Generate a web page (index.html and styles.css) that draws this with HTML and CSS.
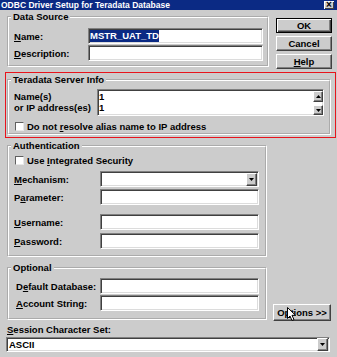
FILE: index.html
```html
<!DOCTYPE html>
<html lang="en">
<head>
  <meta charset="UTF-8" />
  <title>ODBC Driver Setup for Teradata Database</title>
  <link rel="stylesheet" href="styles.css">
</head>
<body>

  <div class="titlebar">
    <span>ODBC Driver Setup for Teradata Database</span>
    <span class="close">×</span>
  </div>

  <div class="top">
    <fieldset class="group ds">
      <legend>Data Source</legend>
      <div class="gbody">
        <div class="row gap1">
          <span class="lbl"><u>N</u>ame:</span>
          <div class="field"><span class="sel">MSTR_UAT_TD</span></div>
        </div>
        <div class="row gap1">
          <span class="lbl"><u>D</u>escription:</span>
          <div class="field"></div>
        </div>
      </div>
    </fieldset>

    <div class="buttons">
      <div class="btn default">OK</div>
      <div class="btn">Cancel</div>
      <div class="btn"><u>H</u>elp</div>
    </div>
  </div>

  <div class="highlight">
    <fieldset class="group server">
      <legend>Teradata Server Info</legend>
      <div class="gbody">
        <div class="hosts">
          <span class="lbl2">Name(s)<br>or IP address(es)</span>
          <div class="field multi">
            <div class="lines">1<br>1</div>
            <div class="spin">
              <div class="mini"><svg width="5" height="3" viewBox="0 0 5 3"><polygon points="0,3 5,3 2.5,0" /></svg></div>
              <div class="mini"><svg width="5" height="3" viewBox="0 0 5 3"><polygon points="0,0 5,0 2.5,3" /></svg></div>
            </div>
          </div>
        </div>
        <div class="check">
          <span class="box"></span>
          <span>Do not <u>r</u>esolve alias name to IP address</span>
        </div>
      </div>
    </fieldset>
  </div>

  <div class="middle">
    <div class="leftcol">
      <fieldset class="group auth">
        <legend>Authentication</legend>
        <div class="gbody">
          <div class="check">
            <span class="box"></span>
            <span>Use <u>I</u>ntegrated Security</span>
          </div>
          <div class="row mech">
            <span class="lbl wide"><u>M</u>echanism:</span>
            <div class="field combo">
              <span class="fill"></span>
              <div class="mini tall"><svg width="5" height="3" viewBox="0 0 5 3"><polygon points="0,0 5,0 2.5,3" /></svg></div>
            </div>
          </div>
          <div class="row gap2">
            <span class="lbl wide">P<u>a</u>rameter:</span>
            <div class="field"></div>
          </div>
          <div class="row gap9">
            <span class="lbl wide"><u>U</u>sername:</span>
            <div class="field"></div>
          </div>
          <div class="row gap3">
            <span class="lbl wide"><u>P</u>assword:</span>
            <div class="field"></div>
          </div>
        </div>
      </fieldset>

      <fieldset class="group optional">
        <legend>Optional</legend>
        <div class="gbody">
          <div class="row">
            <span class="lbl opt">D<u>e</u>fault Database:</span>
            <div class="field"></div>
          </div>
          <div class="row gap1">
            <span class="lbl opt"><u>A</u>ccount String:</span>
            <div class="field"></div>
          </div>
        </div>
      </fieldset>
    </div>

    <div class="btn options">O<u>p</u>tions &gt;&gt;</div>
  </div>

  <div class="session-lbl"><u>S</u>ession Character Set:</div>
  <div class="field combo session">
    <span class="fill">ASCII</span>
    <div class="mini tall"><svg width="5" height="3" viewBox="0 0 5 3"><polygon points="0,0 5,0 2.5,3" /></svg></div>
  </div>

  <svg class="cursor" width="10" height="16" viewBox="0 0 10 16">
    <path d="M0.5 0.5 L0.5 11.5 L3 9 L5 13.5 L7 12.6 L5 8.3 L8.5 8.3 Z" fill="#fff" stroke="#000" stroke-width="1" />
  </svg>

</body>
</html>
```

FILE: styles.css
```css
* {
  box-sizing: border-box;
  margin: 0;
  padding: 0;
}

body {
  width: 337px;
  height: 357px;
  overflow: hidden;
  background: #cccccc;
  color: #000;
  font: bold 9.5px "Liberation Sans", Arial, sans-serif;
  position: relative;
}

u {
  text-decoration: underline;
  text-underline-offset: 1px;
}

/* title bar */

.titlebar {
  height: 10px;
  background: #0b2a84;
  color: #fff;
  display: flex;
  justify-content: space-between;
  align-items: center;
  padding: 0 3px 0 1px;
  font-size: 8.5px;
  line-height: 10px;
  white-space: nowrap;
}

.close {
  width: 10px;
  height: 8px;
  background: #cccccc;
  color: #000;
  font-size: 10px;
  line-height: 8px;
  text-align: center;
  box-shadow: inset 1px 1px #fff, inset -1px -1px #404040;
}

/* group boxes */

fieldset.group {
  border: 2px groove #fff;
  padding: 0;
  min-width: 0;
}

fieldset.group legend {
  margin-left: 2px;
  padding: 0 2px;
  line-height: 12px;
  height: 12px;
}

.row {
  display: flex;
  align-items: center;
}

.gap1 { margin-top: 1px; }
.gap2 { margin-top: 2px; }
.gap3 { margin-top: 3px; }
.gap9 { margin-top: 9px; }

.row:first-child { margin-top: 0; }

.lbl {
  width: 74px;
  flex: none;
  white-space: nowrap;
}

.lbl.wide { width: 86px; }
.lbl.opt { width: 84px; }

/* sunken edit fields */

.field {
  flex: 1;
  height: 16px;
  background: #fff;
  border: 1px solid;
  border-color: #808080 #fff #fff #808080;
  box-shadow: inset 1px 1px #404040, inset -1px -1px #dcdcdc;
  padding: 1px 1px;
  line-height: 12px;
  white-space: nowrap;
  display: flex;
  align-items: center;
}

.sel {
  background: #0b2a84;
  color: #fff;
  margin-left: 0;
}

/* push buttons */

.btn {
  height: 15px;
  background: #cccccc;
  border: 1px solid;
  border-color: #fff #404040 #404040 #fff;
  box-shadow: inset -1px -1px #808080;
  display: flex;
  align-items: center;
  justify-content: center;
  line-height: 12px;
  white-space: nowrap;
}

.btn.default {
  border: 1px solid #000;
  box-shadow: inset 1px 1px #fff, inset -1px -1px #404040, inset -2px -2px #808080;
}

.mini {
  width: 10px;
  height: 11px;
  background: #cccccc;
  border: 1px solid;
  border-color: #fff #404040 #404040 #fff;
  box-shadow: inset -1px -1px #808080;
  display: flex;
  align-items: center;
  justify-content: center;
}

.mini svg {
  fill: #000;
  display: block;
}

/* data source */

.top {
  display: flex;
  align-items: flex-start;
  margin-top: 1px;
}

.ds {
  width: 262px;
  margin-left: 7px;
}

.ds .gbody {
  padding: 5px 4px 4px 5px;
}

.buttons {
  width: 56px;
  margin: 7px 0 0 7px;
  display: flex;
  flex-direction: column;
  gap: 3px;
}

/* server info, outlined in red */

.highlight {
  width: 331px;
  margin: 3px 0 0 5px;
  border: 1px solid #e8141c;
  padding: 1px 4px 2px 1px;
}

.server {
  width: 324px;
}

.server .gbody {
  padding: 3px 5px 1px 5px;
}

.hosts {
  display: flex;
  align-items: flex-start;
}

.lbl2 {
  width: 83px;
  flex: none;
  line-height: 11px;
  padding-top: 2px;
  white-space: nowrap;
}

.field.multi {
  height: 27px;
  padding: 0 0 0 1px;
  align-items: stretch;
}

.lines {
  flex: 1;
  line-height: 11px;
  padding-top: 1px;
}

.spin {
  width: 10px;
  display: flex;
  flex-direction: column;
  justify-content: space-between;
  padding: 1px 0 0;
}

.spin .mini:last-child {
  height: 10px;
}

.check {
  display: flex;
  align-items: center;
  height: 11px;
  margin-top: 5px;
  gap: 3px;
  white-space: nowrap;
}

.box {
  width: 9px;
  height: 9px;
  margin-left: 1px;
  background: #fff;
  border: 1px solid;
  border-color: #606060 #e8e8e8 #e8e8e8 #606060;
}

/* authentication / optional */

.middle {
  display: flex;
  margin-top: 2px;
}

.leftcol {
  width: 260px;
  margin-left: 7px;
  flex: none;
}

.auth .gbody {
  padding: 3px 6px 6px 5px;
}

.auth .check {
  margin-top: 0;
}

.mech {
  margin-top: 5px;
}

.combo {
  padding: 1px 1px 1px 1px;
  justify-content: space-between;
}

.combo .fill {
  flex: 1;
  padding-left: 0;
}

.mini.tall {
  height: 13px;
  width: 11px;
}

.optional {
  margin-top: 5px;
}

.optional .gbody {
  padding: 4px 6px 7px 7px;
}

.options {
  width: 58px;
  height: 17px;
  margin: 0 0 -1px 6px;
  align-self: flex-end;
}

/* session character set */

.session-lbl {
  margin: 4px 0 0 7px;
  line-height: 11px;
}

.field.session {
  width: 324px;
  height: 15px;
  margin: 2px 0 0 6px;
  padding-left: 2px;
}

.cursor {
  position: absolute;
  left: 287px;
  top: 307px;
}
```
